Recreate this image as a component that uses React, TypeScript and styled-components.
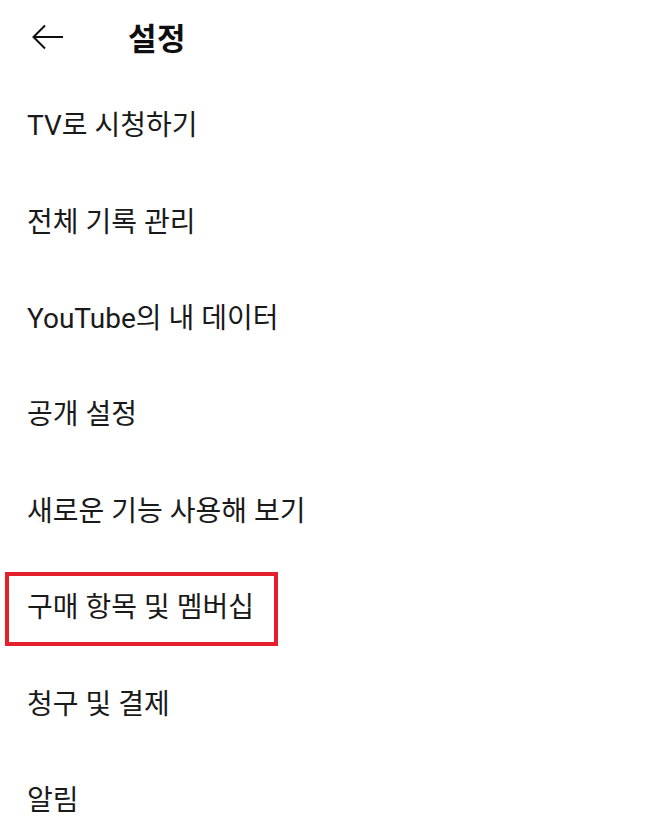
import React from "react";
import styled, { createGlobalStyle } from "styled-components";

const Global = createGlobalStyle`
  body {
    margin: 0;
    background: #ffffff;
    font-family: Roboto, "Noto Sans CJK KR", "Noto Sans", sans-serif;
    color: #0f0f0f;
  }
`;

const Page = styled.div`
  width: 648px;
  height: 832px;
  overflow: hidden;
  background: #fff;
`;

const Header = styled.div`
  height: 73px;
  display: flex;
  align-items: center;
  padding-left: 32px;
  padding-bottom: 2px;
`;

const BackButton = styled.div`
  width: 32px;
  height: 32px;
  display: flex;
  align-items: center;
  justify-content: center;
  margin-right: 64px;
`;

const Title = styled.h1`
  margin: 0;
  font-size: 31px;
  font-weight: 700;
  letter-spacing: 0.5px;
`;

const Row = styled.div`
  position: relative;
  height: 96.4px;
  display: flex;
  align-items: center;
  padding-left: 27px;
  font-size: 28px;
  font-weight: 400;
  color: #1a1a1a;
`;

const Highlight = styled.div`
  position: absolute;
  left: 5px;
  top: 15.5px;
  width: 273px;
  height: 74px;
  box-sizing: border-box;
  border: 4px solid #e3202c;
`;

const items = [
  "TV로 시청하기",
  "전체 기록 관리",
  "YouTube의 내 데이터",
  "공개 설정",
  "새로운 기능 사용해 보기",
  "구매 항목 및 멤버십",
  "청구 및 결제",
  "알림",
];

export default function App() {
  return (
    <Page>
      <Global />
      <Header>
        <BackButton>
          <svg width="32" height="26" viewBox="0 0 32 26" fill="none">
            <path d="M31 13H2M13 1.5L1.5 13L13 24.5" stroke="#0f0f0f" strokeWidth="2" />
          </svg>
        </BackButton>
        <Title>설정</Title>
      </Header>
      {items.map((label, i) => (
        <Row key={label}>
          {label}
          {i === 5 && <Highlight />}
        </Row>
      ))}
    </Page>
  );
}
